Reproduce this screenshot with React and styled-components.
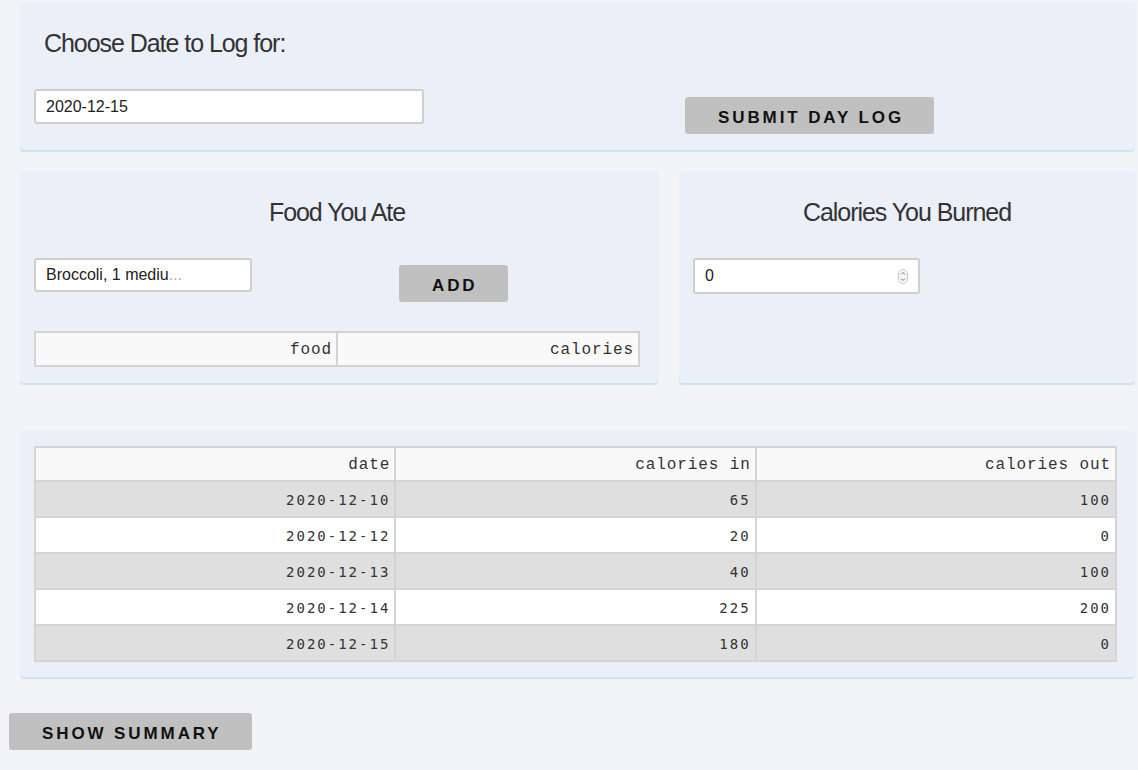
import React from "react";
import styled, { createGlobalStyle } from "styled-components";

const Global = createGlobalStyle`
  html, body { margin: 0; padding: 0; background: #f3f4f8; }
  body { font-family: "Liberation Sans", Arial, sans-serif; color: #333; }
  * { box-sizing: border-box; }
`;

const Page = styled.div`
  padding: 2px 3px 19px 9px;
  display: flex;
  flex-direction: column;
  align-items: flex-start;
`;

const Panel = styled.section`
  background: #ebeff7;
  border-radius: 4px;
  box-shadow: 0 2px 1px rgba(190, 220, 238, 0.75);
  padding: ${(p) => p.$pad || "14px"};
  margin-top: ${(p) => p.$mt || 0}px;
  ${(p) => p.$full && "align-self: stretch; margin-left: 11px;"}
`;

const MiddleRow = styled.div`
  align-self: stretch;
  margin: 21px 0 0 11px;
  display: grid;
  grid-template-columns: 638px 1fr;
  gap: 21px;
`;

const Heading = styled.h2`
  margin: ${(p) => p.$margin || "0"};
  font-size: 25px;
  line-height: 30px;
  font-weight: 400;
  letter-spacing: -1.05px;
  color: #333;
  text-align: ${(p) => (p.$center ? "center" : "left")};
`;

const Row = styled.div`
  display: flex;
  align-items: flex-start;
  margin-top: ${(p) => p.$mt || 0}px;
`;

const Field = styled.input`
  width: ${(p) => p.$w}px;
  height: ${(p) => p.$h || 35}px;
  border: 2px solid #cfcfcf;
  border-radius: 3px;
  background: #fff;
  padding: 0 10px;
  font-family: "Liberation Sans", Arial, sans-serif;
  font-size: 16px;
  color: #222;
  outline: none;
`;

const FakeField = styled.div`
  width: ${(p) => p.$w}px;
  height: ${(p) => p.$h || 35}px;
  border: 2px solid #cfcfcf;
  border-radius: 3px;
  background: #fff;
  padding: 0 10px;
  display: flex;
  align-items: center;
  justify-content: space-between;
  font-family: "Liberation Sans", Arial, sans-serif;
  font-size: 16px;
  color: #222;
  white-space: nowrap;
  overflow: hidden;
`;

const Faded = styled.span`
  color: #aaa;
`;

const Button = styled.button`
  height: 37px;
  margin: ${(p) => p.$margin || "0"};
  padding: 5px 30px 0 33px;
  border: none;
  border-radius: 3px;
  background: #bfc0bf;
  color: #111;
  font-family: "Liberation Sans", Arial, sans-serif;
  font-weight: 700;
  font-size: 17px;
  letter-spacing: 2.9px;
  cursor: pointer;
`;

const Table = styled.table`
  width: 100%;
  border-collapse: collapse;
  table-layout: fixed;
  border: 2px solid #d4d4d4;
`;

const Th = styled.th`
  height: 34px;
  padding: 2px 4px 0;
  text-align: right;
  background: #f9f9f9;
  border: 2px solid #d4d4d4;
  font-family: "Liberation Mono", "Courier New", monospace;
  font-weight: 400;
  font-size: 16px;
  letter-spacing: 0.9px;
  color: #333;
`;

const Tr = styled.tr`
  background: ${(p) => (p.$odd ? "#dfdfdf" : "#ffffff")};
`;

const Td = styled.td`
  height: 36px;
  padding: 2px 4px 0;
  text-align: right;
  border: 2px solid #d4d4d4;
  font-family: "DejaVu Sans Mono", Menlo, monospace;
  font-size: 14px;
  letter-spacing: 2px;
  color: #333;
`;

const Spinner = () => (
  <svg width="10" height="15" viewBox="0 0 10 15">
    <rect x="0.5" y="0.5" width="9" height="14" rx="4.5" fill="#f8f8f8" stroke="#c8c8c8" />
    <path d="M3 5.5 L5 3.5 L7 5.5" fill="none" stroke="#777" strokeWidth="1" />
    <path d="M3 9.5 L5 11.5 L7 9.5" fill="none" stroke="#777" strokeWidth="1" />
  </svg>
);

const log = [
  ["2020-12-10", 65, 100],
  ["2020-12-12", 20, 0],
  ["2020-12-13", 40, 100],
  ["2020-12-14", 225, 200],
  ["2020-12-15", 180, 0],
];

export default function App() {
  return (
    <>
      <Global />
      <Page>
        <Panel $full $pad="14px 14px 16px 14px">
          <Heading $margin="12px 0 0 10px">Choose Date to Log for:</Heading>
          <Row $mt={31}>
            <Field $w={390} defaultValue="2020-12-15" />
            <Button $margin="8px 0 0 261px">SUBMIT DAY LOG</Button>
          </Row>
        </Panel>

        <MiddleRow>
          <Panel $pad="14px 18px 16px 14px">
            <Heading $center $margin="12px 0 0">Food You Ate</Heading>
            <Row $mt={31}>
              <FakeField $w={218} $h={34}>
                <span>
                  Broccoli, 1 mediu<Faded>...</Faded>
                </span>
              </FakeField>
              <Button $margin="7px 0 0 147px">ADD</Button>
            </Row>
            <Row $mt={29}>
              <Table>
                <thead>
                  <tr>
                    <Th>food</Th>
                    <Th>calories</Th>
                  </tr>
                </thead>
              </Table>
            </Row>
          </Panel>
          <Panel $pad="14px 14px 16px 14px">
            <Heading $center $margin="12px 0 0">Calories You Burned</Heading>
            <Row $mt={31}>
              <FakeField $w={227} $h={36}>
                <span>0</span>
                <Spinner />
              </FakeField>
            </Row>
          </Panel>
        </MiddleRow>

        <Panel $full $mt={48} $pad="15px 18px 15px 14px">
          <Table>
            <thead>
              <tr>
                <Th>date</Th>
                <Th>calories in</Th>
                <Th>calories out</Th>
              </tr>
            </thead>
            <tbody>
              {log.map((r, i) => (
                <Tr key={r[0]} $odd={i % 2 === 0}>
                  <Td>{r[0]}</Td>
                  <Td>{r[1]}</Td>
                  <Td>{r[2]}</Td>
                </Tr>
              ))}
            </tbody>
          </Table>
        </Panel>

        <Button $margin="36px 0 0 0">SHOW SUMMARY</Button>
      </Page>
    </>
  );
}
